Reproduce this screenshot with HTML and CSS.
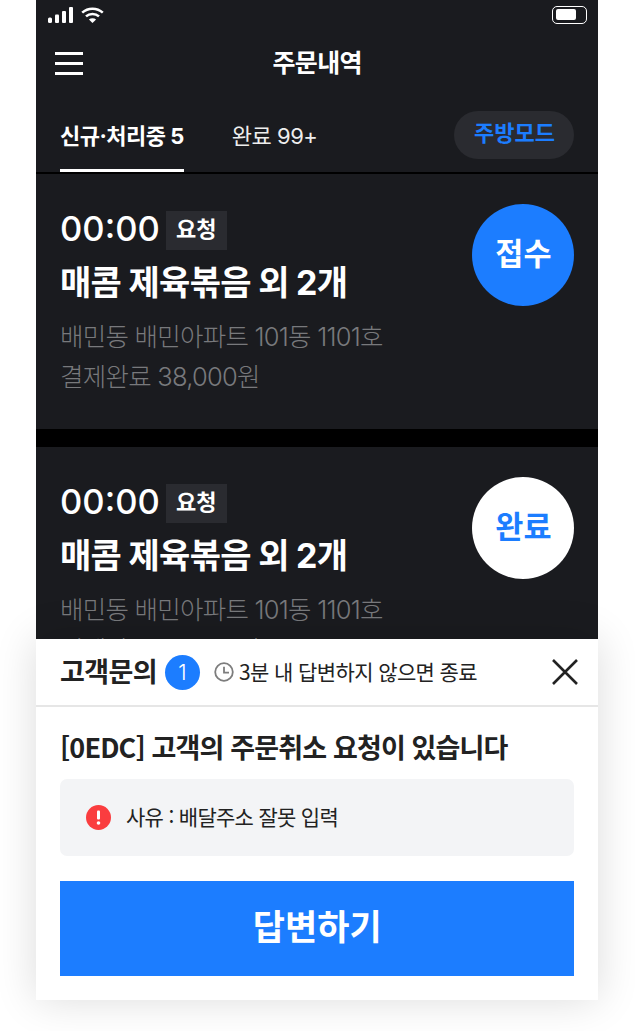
FILE: index.html
```html
<!DOCTYPE html>
<html lang="ko">
<head>
<meta charset="utf-8">
<title>주문내역</title>
<link rel="stylesheet" href="styles.css">
</head>
<body>
<div class="phone">
  <div class="status">
    <div class="status-left">
      <svg width="25" height="16" viewBox="0 0 25 16"><g fill="#fff"><rect x="0" y="10.5" width="4" height="5.5" rx="1.5"/><rect x="7" y="7.5" width="4" height="8.5" rx="1"/><rect x="14" y="4" width="4" height="12" rx="1"/><rect x="21" y="0" width="4" height="16" rx="1"/></g></svg>
      <svg width="23" height="16" viewBox="0 0 23 16" fill="none" stroke="#fff" stroke-width="2.6"><path d="M1.2 5.6C7 .4 16 .4 21.8 5.6"/><path d="M5 9.4c3.6-3.2 9.4-3.2 13 0"/><path d="M11.5 16l-3.6-3.6c2-1.5 5.2-1.5 7.2 0z" fill="#fff" stroke="none"/></svg>
    </div>
    <div class="battery"><span class="battery-fill"></span></div>
  </div>
  <header class="topbar">
    <svg class="menu" width="28" height="23" viewBox="0 0 28 23"><g fill="#fff"><rect y="0" width="28" height="3"/><rect y="10" width="28" height="3"/><rect y="20" width="28" height="3"/></g></svg>
    <h1 class="title">주문내역</h1>
  </header>
  <nav class="tabs">
    <div class="tab tab-on">신규·처리중 5</div>
    <div class="tab">완료 99+</div>
    <div class="kitchen">주방모드</div>
  </nav>
  <section class="card">
    <div class="info">
      <div class="time-row"><span class="time">00:00</span><span class="tag">요청</span></div>
      <div class="menu-name">매콤 제육볶음 외 2개</div>
      <div class="meta">배민동 배민아파트 101동 1101호</div>
      <div class="meta">결제완료 38,000원</div>
    </div>
    <div class="circle circle-blue">접수</div>
  </section>
  <section class="card">
    <div class="info">
      <div class="time-row"><span class="time">00:00</span><span class="tag">요청</span></div>
      <div class="menu-name">매콤 제육볶음 외 2개</div>
      <div class="meta">배민동 배민아파트 101동 1101호</div>
      <div class="meta">결제완료 38,000원</div>
    </div>
    <div class="circle circle-white">완료</div>
  </section>
  <aside class="sheet">
    <div class="sheet-head">
      <strong class="sheet-title">고객문의</strong>
      <span class="count">1</span>
      <svg class="clock" width="20" height="20" viewBox="0 0 20 20" fill="none" stroke="#7d7d7d" stroke-width="1.8"><circle cx="10" cy="10" r="8.8"/><path d="M10 4.8V10.6H15"/></svg>
      <span class="limit">3분 내 답변하지 않으면 종료</span>
      <svg class="close" width="26" height="26" viewBox="0 0 26 26" fill="none" stroke="#222" stroke-width="2.6"><path d="M1 1L25 25M25 1L1 25"/></svg>
    </div>
    <div class="sheet-body">
      <h2 class="notice">[0EDC] 고객의 주문취소 요청이 있습니다</h2>
      <div class="reason">
        <svg width="25" height="25" viewBox="0 0 25 25"><circle cx="12.5" cy="12.5" r="12.5" fill="#fa3d3f"/><rect x="11" y="5.5" width="3" height="9" rx="1" fill="#fff"/><circle cx="12.5" cy="18" r="1.8" fill="#fff"/></svg>
        <span class="reason-text">사유 : 배달주소 잘못 입력</span>
      </div>
      <div class="answer">답변하기</div>
    </div>
  </aside>
</div>
</body>
</html>
```
FILE: styles.css
```css
* { box-sizing: border-box; }
html, body { margin: 0; padding: 0; background: #fff; }
body {
  height: 1031px;
  overflow: hidden;
  font-family: "Noto Sans CJK KR", "Noto Sans", sans-serif;
  color: #222;
}
.phone {
  position: relative;
  width: 562.4px;
  height: 1000px;
  margin-left: 36px;
  background: #1a1b1f;
  color: #fff;
  font-family: "Inter", "Noto Sans CJK KR", sans-serif;
}
.status {
  height: 30px;
  padding: 7px 11px 0 12px;
  display: flex;
  justify-content: space-between;
}
.status-left { display: flex; gap: 8px; align-items: flex-start; }
.battery {
  width: 35px;
  height: 18px;
  margin-top: -1px;
  border: 1.6px solid #fff;
  border-radius: 5px;
  padding: 2px 3px;
}
.battery-fill { display: block; width: 20px; height: 10.5px; background: #fff; border-radius: 2px; }
.topbar {
  height: 64px;
  padding-top: 2px;
  display: flex;
  align-items: center;
  justify-content: center;
  position: relative;
}
.menu { position: absolute; left: 19px; top: 22px; }
.title { margin: 0; font-size: 25px; font-weight: 700; letter-spacing: -0.6px; line-height: 36px; }
.tabs {
  height: 80px;
  display: flex;
  align-items: center;
  gap: 48px;
  padding: 0 24px;
  border-bottom: 2px solid #000;
  position: relative;
}
.tab { font-size: 22px; height: 78px; line-height: 84px; letter-spacing: -0.5px; color: #eee; font-weight: 400; }
.tab-on { font-weight: 700; color: #fff; border-bottom: 3px solid #fff; }
.kitchen {
  margin-left: auto;
  margin-top: 4px;
  width: 120px;
  height: 48px;
  border-radius: 24px;
  background: #2a2b30;
  color: #1c7dff;
  font-size: 22px;
  font-weight: 700;
  line-height: 45px;
  text-align: center;
}
.card {
  height: 255px;
  padding: 30px 24px 0;
  display: flex;
  justify-content: space-between;
  margin-bottom: 18px;
  box-shadow: 0 18px 0 #000;
}
.time-row { display: flex; align-items: center; gap: 6px; height: 52px; }
.time { font-size: 34.6px; font-weight: 500; letter-spacing: 0; position: relative; top: -2px; }
.tag {
  width: 61px;
  height: 39px;
  background: #2a2b30;
  font-size: 22px;
  font-weight: 700;
  line-height: 36px;
  text-align: center;
}
.menu-name { font-size: 34px; font-weight: 700; letter-spacing: -0.7px; line-height: 46px; margin-top: 4px; }
.meta { font-size: 25.5px; font-weight: 300; color: #78797c; letter-spacing: -0.75px; line-height: 40px; }
.menu-name + .meta { margin-top: 11px; }
.circle {
  width: 102px;
  height: 102px;
  border-radius: 50%;
  font-size: 30.5px;
  font-weight: 700;
  line-height: 99px;
  text-align: center;
}
.circle-blue { background: #1c7dff; color: #fff; }
.circle-white { background: #fff; color: #1c7dff; }
.sheet {
  position: absolute;
  left: 0;
  right: 0;
  top: 639px;
  bottom: 0;
  background: #fff;
  color: #222;
  box-shadow: 0 0 40px rgba(0, 0, 0, 0.14);
  font-family: "Noto Sans CJK KR", "Noto Sans", sans-serif;
}
.sheet-head {
  height: 68px;
  border-bottom: 2px solid #e6e6e6;
  display: flex;
  align-items: center;
  padding: 0 20px 0 24px;
}
.sheet-title { font-size: 27px; font-weight: 700; letter-spacing: -0.6px; line-height: 36px; padding-bottom: 3px; }
.count {
  width: 35px;
  height: 35px;
  margin-left: 8px;
  border-radius: 50%;
  background: #1c7dff;
  color: #fff;
  font-family: "Inter", sans-serif;
  font-size: 21px;
  font-weight: 300;
  line-height: 35px;
  text-align: center;
}
.clock { margin-left: 14px; }
.limit { margin-left: 5px; font-size: 21px; letter-spacing: -0.6px; line-height: 30px; padding-bottom: 2px; }
.close { margin-left: auto; }
.sheet-body { padding: 18px 24px 0; }
.notice { margin: 0; font-size: 27px; font-weight: 700; letter-spacing: -0.85px; line-height: 44px; }
.reason {
  height: 77px;
  margin-top: 10px;
  background: #f3f4f6;
  border-radius: 7px;
  display: flex;
  align-items: center;
  gap: 15px;
  padding-left: 26px;
  font-size: 21px;
  letter-spacing: -0.7px;
}
.reason-text { line-height: 30px; padding-bottom: 3px; }
.answer {
  height: 95px;
  margin-top: 25px;
  background: #1c7dff;
  color: #fff;
  font-size: 35px;
  font-weight: 700;
  line-height: 88px;
  text-align: center;
}
```
